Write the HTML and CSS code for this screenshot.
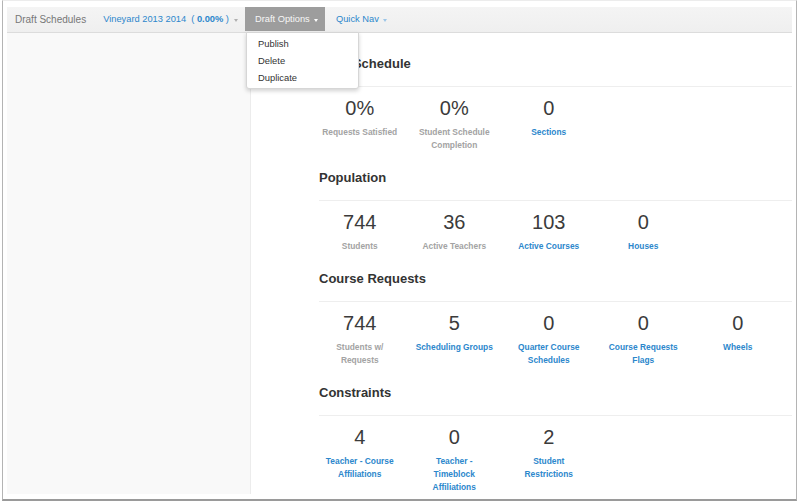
FILE: index.html
```html
<!DOCTYPE html>
<html>
<head>
<meta charset="utf-8">
<link rel="stylesheet" href="styles.css">
</head>
<body>
<div class="frame">
  <div class="app">
    <nav class="navbar">
      <span class="nav-item brand">Draft Schedules</span>
      <span class="nav-item link">Vineyard 2013 2014 <span class="pct">( <b>0.00%</b> )</span><span class="caret gray"></span></span>
      <span class="nav-item active">Draft Options<span class="caret white"></span></span>
      <span class="nav-item link">Quick Nav<span class="caret blue"></span></span>
    </nav>
    <ul class="dropdown">
      <li>Publish</li>
      <li>Delete</li>
      <li>Duplicate</li>
    </ul>
    <div class="layout">
      <aside class="sidebar"></aside>
      <main class="main">
        <section class="section">
          <h3 class="heading">Draft Schedule</h3>
          <div class="stats">
            <div class="stat"><div class="num">0%</div><div class="label">Requests Satisfied</div></div>
            <div class="stat"><div class="num">0%</div><div class="label">Student Schedule Completion</div></div>
            <div class="stat"><div class="num">0</div><div class="label link">Sections</div></div>
          </div>
        </section>
        <section class="section">
          <h3 class="heading">Population</h3>
          <div class="stats">
            <div class="stat"><div class="num">744</div><div class="label">Students</div></div>
            <div class="stat"><div class="num">36</div><div class="label">Active Teachers</div></div>
            <div class="stat"><div class="num">103</div><div class="label link">Active Courses</div></div>
            <div class="stat"><div class="num">0</div><div class="label link">Houses</div></div>
          </div>
        </section>
        <section class="section">
          <h3 class="heading">Course Requests</h3>
          <div class="stats">
            <div class="stat"><div class="num">744</div><div class="label">Students w/ Requests</div></div>
            <div class="stat"><div class="num">5</div><div class="label link">Scheduling Groups</div></div>
            <div class="stat"><div class="num">0</div><div class="label link">Quarter Course Schedules</div></div>
            <div class="stat"><div class="num">0</div><div class="label link">Course Requests Flags</div></div>
            <div class="stat"><div class="num">0</div><div class="label link">Wheels</div></div>
          </div>
        </section>
        <section class="section">
          <h3 class="heading">Constraints</h3>
          <div class="stats">
            <div class="stat"><div class="num">4</div><div class="label link">Teacher - Course Affiliations</div></div>
            <div class="stat"><div class="num">0</div><div class="label link">Teacher - Timeblock Affiliations</div></div>
            <div class="stat"><div class="num">2</div><div class="label link">Student Restrictions</div></div>
          </div>
        </section>
      </main>
    </div>
  </div>
</div>
</body>
</html>
```

FILE: styles.css
```css
html, body {
  margin: 0;
  padding: 0;
  background: #ffffff;
}
body {
  font-family: "Liberation Sans", Arial, Helvetica, sans-serif;
  color: #333;
}
.frame {
  box-sizing: border-box;
  margin-left: 2px;
  width: 795px;
  height: 501px;
  padding: 6px 3px 6px 4px;
  border: 1px solid #b4b4b4;
  border-top-color: #ececec;
  border-bottom: 2px solid #9a9a9a;
  background: #fff;
  overflow: hidden;
}
.app {
  position: relative;
  width: 785px;
  height: 487px;
  display: flex;
  flex-direction: column;
  overflow: hidden;
}
.navbar {
  box-sizing: border-box;
  height: 26px;
  flex: none;
  display: flex;
  align-items: flex-start;
  background: linear-gradient(#f4f4f4, #efefef);
  border-bottom: 1px solid #dcdcdc;
  font-size: 9.3px;
}
.nav-item {
  height: 24px;
  line-height: 23px;
  white-space: nowrap;
  display: flex;
  align-items: center;
}
.brand {
  color: #777;
  font-size: 10px;
  padding: 0 17px 0 8px;
}
.link {
  color: #2c87cc;
}
.nav-item.link {
  padding: 0 7px 0 0;
}
.nav-item.link:last-child {
  padding-left: 11px;
}
.pct {
  margin-left: 5px;
}
.pct b {
  font-weight: bold;
}
.active {
  background: #9d9d9d;
  color: #f7f7f7;
  padding: 0 9px 0 10px;
  width: 80px;
  box-sizing: border-box;
}
.caret {
  display: inline-block;
  width: 0;
  height: 0;
  margin-left: 4px;
  border-left: 2.5px solid transparent;
  border-right: 2.5px solid transparent;
  border-top: 3px solid #aaa;
  transform: translateY(1px);
}
.caret.white { border-top-color: #fff; margin-left: 4px; }
.caret.blue { border-top-color: #9cc6e8; }
.caret.gray { border-top-color: #b0b0b0; margin-left: 5px; }

.dropdown {
  position: absolute;
  left: 239px;
  top: 25px;
  width: 113px;
  height: 57px;
  box-sizing: border-box;
  margin: 0;
  padding: 2px 0 0 11px;
  list-style: none;
  background: #fff;
  border: 1px solid #d6d6d6;
  border-radius: 0 0 3px 3px;
  box-shadow: 0 2px 4px rgba(0,0,0,0.18);
  font-size: 9.4px;
  color: #333;
  z-index: 5;
}
.dropdown li {
  line-height: 17px;
}
.layout {
  flex: 1;
  display: flex;
  min-height: 0;
}
.sidebar {
  width: 243px;
  flex: none;
  background: #f9f9f9;
  border-right: 1px solid #ececec;
}
.main {
  flex: 1;
  padding: 23px 0 0 68px;
  background: #fff;
}
.section {
  margin-bottom: 18.5px;
}
.heading {
  margin: 0 0 14px 0;
  font-size: 13px;
  line-height: 16px;
  font-weight: bold;
  color: #333;
}
.stats {
  border-top: 1px solid #eeeeee;
  padding-top: 8.5px;
  display: grid;
  grid-template-columns: repeat(5, 94.5px);
}
.stat {
  text-align: center;
  padding: 0 7.5px;
  margin-left: -6.5px;
  margin-right: 6.5px;
}
.num {
  font-size: 20px;
  line-height: 24px;
  color: #3b3b3b;
}
.label {
  margin-top: 6px;
  font-size: 8.4px;
  line-height: 13px;
  font-weight: bold;
  color: #a3a3a3;
}
.label.link {
  color: #2c87cc;
}
```
